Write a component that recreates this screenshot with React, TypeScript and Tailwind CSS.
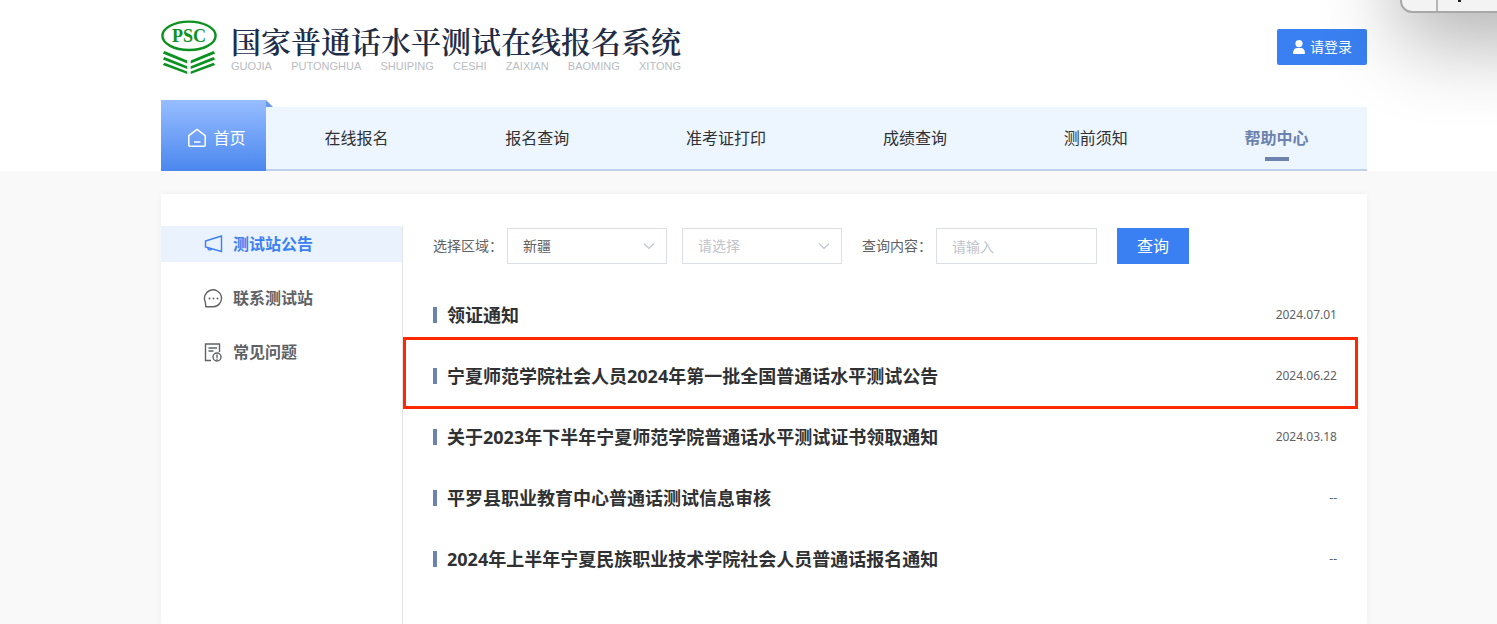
import type { ReactNode } from "react";

interface Notice {
  title: string;
  date: string;
  marked?: boolean;
}

const navItems = ["在线报名", "报名查询", "准考证打印", "成绩查询", "测前须知", "帮助中心"];

const notices: Notice[] = [
  { title: "领证通知", date: "2024.07.01" },
  { title: "宁夏师范学院社会人员2024年第一批全国普通话水平测试公告", date: "2024.06.22", marked: true },
  { title: "关于2023年下半年宁夏师范学院普通话水平测试证书领取通知", date: "2024.03.18" },
  { title: "平罗县职业教育中心普通话测试信息审核", date: "--" },
  { title: "2024年上半年宁夏民族职业技术学院社会人员普通话报名通知", date: "--" },
];

function Logo() {
  return (
    <svg width="56" height="54" viewBox="0 0 56 54" aria-hidden="true">
      <ellipse cx="28" cy="15.8" rx="26.6" ry="14.2" fill="#fff" stroke="#0b9220" strokeWidth="2.4" />
      <text
        x="28"
        y="22"
        textAnchor="middle"
        fontFamily="'Liberation Serif', serif"
        fontWeight="700"
        fontSize="18"
        fill="#0b9220"
      >
        PSC
      </text>
      <g fill="#0b9220">
        <path d="M3.5 31 26.3 40.4v3L1.8 33.4zM3.500 37 26.3 46.200v2.800L1.8 39.400zM3.5 42.700 26.3 51.400V54L1.8 45z" />
        <path d="M52.5 31 29.7 40.4v3L54.2 33.4zM52.5 37 29.7 46.200v2.800L54.2 39.400zM52.5 42.700 29.7 51.400V54L54.2 45z" />
      </g>
    </svg>
  );
}

function HomeIcon() {
  return (
    <svg width="20" height="20" viewBox="0 0 20 20" fill="none" stroke="currentColor" strokeWidth="1.5" aria-hidden="true">
      <path d="M1.8 7.6 10 1.3l8.2 6.3v9.6a1 1 0 0 1-1 1H2.8a1 1 0 0 1-1-1z" strokeLinejoin="round" />
      <path d="M7 14h6.5" />
    </svg>
  );
}

function UserIcon() {
  return (
    <svg width="14" height="14" viewBox="0 0 14 14" fill="currentColor" aria-hidden="true">
      <circle cx="7" cy="3.6" r="3.6" />
      <path d="M1 13.2C1 9.8 3 8 5 8h4c2 0 4 1.8 4 5.2 0 .5-.3.8-.8.8H1.8c-.5 0-.8-.3-.8-.8z" />
    </svg>
  );
}

function HornIcon() {
  return (
    <svg width="20" height="20" viewBox="0 0 20 20" fill="none" stroke="currentColor" strokeWidth="1.4" aria-hidden="true">
      <path d="M2.5 7 18.5 2v15.5L2.5 13z" />
      <path d="M5 13.7c-.2 1.3.6 2.2 1.7 2.2 1 0 1.9-.6 1.9-1.5" />
    </svg>
  );
}

function ChatIcon() {
  return (
    <svg width="20" height="20" viewBox="0 0 20 20" fill="none" stroke="currentColor" strokeWidth="1.4" aria-hidden="true">
      <path d="M2.8 18.8 2.3 14A8.5 8.5 0 1 1 10.5 18.8z" strokeLinejoin="round" />
      <g fill="currentColor" stroke="none">
        <circle cx="6.5" cy="10.5" r="1" />
        <circle cx="10.5" cy="10.5" r="1" />
        <circle cx="14.5" cy="10.5" r="1" />
      </g>
    </svg>
  );
}

function FaqIcon() {
  return (
    <svg width="20" height="20" viewBox="0 0 20 20" fill="none" stroke="currentColor" strokeWidth="1.4" aria-hidden="true">
      <path d="M8 18.5H2.5V2h14v8" />
      <path d="M5.5 6H14M5.5 9h5" />
      <circle cx="14" cy="15" r="4" />
      <path d="M14 12.5v3.2M14 16.5v1.2" />
    </svg>
  );
}

function ChevronIcon() {
  return (
    <svg
      className="pointer-events-none absolute top-1/2 right-3 -translate-y-1/2 text-[#c0c4cc]"
      width="12"
      height="12"
      viewBox="0 0 12 12"
      fill="none"
      stroke="currentColor"
      strokeWidth="1.2"
      aria-hidden="true"
    >
      <path d="m1 3.5 5 5 5-5" />
    </svg>
  );
}

function SideLink({ icon, label, active }: { icon: ReactNode; label: string; active?: boolean }) {
  return (
    <a
      href="#"
      aria-current={active ? "page" : undefined}
      className={`flex h-9 items-center gap-2.5 pl-[42px] text-base font-bold ${
        active ? "bg-[#eaf2fe] text-[#3a80f2]" : "text-[#606266]"
      }`}
    >
      {icon}
      {label}
    </a>
  );
}

function NoticeRow({ title, date, marked }: Notice) {
  return (
    <li className="relative flex h-[61px] items-center justify-between">
      <a href="#" className="flex items-center gap-2.5 text-lg font-bold text-[#303133]">
        <span className="h-4 w-1 bg-[#6b83ad]" />
        {title}
      </a>
      <span className="text-xs text-[#606266]">{date}</span>
      {marked && (
        <span className="pointer-events-none absolute -top-2 -right-[21px] -bottom-[3px] -left-[30px] border-3 border-[#ff2800]" />
      )}
    </li>
  );
}

// Corner of the floating window that hangs over the page
function FloatingWindow() {
  return (
    <div className="pointer-events-none absolute inset-x-0 top-0 h-[171px] overflow-hidden">
      <div className="absolute -top-28 -right-28 flex h-[125px] w-[209px] rounded-xl border-2 border-[#a8a8a8] bg-[#f3f3f3] shadow-[0_30px_80px_rgba(0,0,0,0.3)]">
        <div className="w-9 border-r-2 border-[#b5b5b5]" />
        <div className="ml-5 h-28 w-[3px] bg-[#222]" />
      </div>
    </div>
  );
}

export default function App() {
  return (
    <div className="relative flex min-h-screen flex-col bg-[#f9f9f9] font-['Noto_Sans','Noto_Sans_CJK_SC',sans-serif] text-[#303133]">
      <header className="bg-white pr-[130px] pl-[161px]">
        <div className="mb-1.5 flex h-[94px] items-center justify-between">
          <a href="#" className="flex items-center gap-3.5">
            <Logo />
            <span className="flex flex-col">
              <span className="font-['Noto_Serif_CJK_SC','Noto_Sans_CJK_SC',serif] text-[30px] leading-9 font-semibold text-[#1f2d47]">
                国家普通话水平测试在线报名系统
              </span>
              <span className="mt-0.5 flex justify-between font-['Liberation_Sans',sans-serif] text-[11px] leading-3 text-[#b9bcc3]">
                <span>GUOJIA</span> <span>PUTONGHUA</span> <span>SHUIPING</span> <span>CESHI</span>{" "}
                <span>ZAIXIAN</span> <span>BAOMING</span> <span>XITONG</span>
              </span>
            </span>
          </a>
          <button
            type="button"
            className="flex h-9 w-[90px] items-center justify-center gap-1 rounded-xs bg-[#3a80f2] text-sm text-white"
          >
            <UserIcon />
            请登录
          </button>
        </div>
        <nav className="flex items-end">
          <a
            href="#"
            className="relative flex h-[71px] w-[105px] items-center justify-center gap-1.5 bg-linear-to-b from-[#97bdff] to-[#4a87ee] pt-1 pl-1.5 text-base text-white"
          >
            <HomeIcon />
            首页
            <svg className="absolute top-0 left-full" width="7" height="7" viewBox="0 0 7 7" aria-hidden="true">
              <path d="M0 0 7 7H0z" fill="#6a9ae6" />
            </svg>
          </a>
          <div className="flex h-16 flex-1 justify-around border-b-2 border-[#bfd2e9] bg-[#edf5ff]">
            {navItems.map((item) => (
              <a
                key={item}
                href="#"
                className={`relative flex items-center text-base ${
                  item === "帮助中心" ? "font-bold text-[#6b83ad]" : "text-[#303133]"
                }`}
              >
                {item}
                {item === "帮助中心" && (
                  <span className="absolute bottom-2 left-1/2 h-1 w-6 -translate-x-1/2 bg-[#6b83ad]" />
                )}
              </a>
            ))}
          </div>
        </nav>
      </header>

      <main className="mt-[23px] mr-[130px] ml-[161px] flex flex-1 bg-white pt-8 shadow-[0_0_8px_rgba(0,0,0,0.04)]">
        <aside className="flex w-[242px] flex-col gap-[18px] border-r border-[#e4e4e6]">
          <SideLink icon={<HornIcon />} label="测试站公告" active />
          <SideLink icon={<ChatIcon />} label="联系测试站" />
          <SideLink icon={<FaqIcon />} label="常见问题" />
        </aside>

        <section className="flex-1 px-[30px] pt-0.5">
          <form className="flex items-center text-sm text-[#606266]">
            <label htmlFor="region" className="mr-1">
              选择区域：
            </label>
            <div className="relative mr-[15px] w-40">
              <select id="region" className="h-9 w-full appearance-none border border-[#dcdfe6] bg-white pl-[15px]">
                <option>新疆</option>
              </select>
              <ChevronIcon />
            </div>
            <div className="relative mr-5 w-40">
              <select
                aria-label="测试站"
                className="h-9 w-full appearance-none border border-[#dcdfe6] bg-white pl-[15px] text-[#c0c4cc]"
              >
                <option>请选择</option>
              </select>
              <ChevronIcon />
            </div>
            <label htmlFor="keyword" className="mr-1">
              查询内容：
            </label>
            <input
              id="keyword"
              type="text"
              placeholder="请输入"
              className="mr-5 h-9 w-[161px] border border-[#dcdfe6] px-[15px] placeholder:text-[#c0c4cc]"
            />
            <button type="button" className="h-9 w-[72px] bg-[#3a80f2] text-base text-white">
              查询
            </button>
          </form>

          <ul className="mt-5">
            {notices.map((notice) => (
              <NoticeRow key={notice.title} {...notice} />
            ))}
          </ul>
        </section>
      </main>

      <FloatingWindow />
    </div>
  );
}
